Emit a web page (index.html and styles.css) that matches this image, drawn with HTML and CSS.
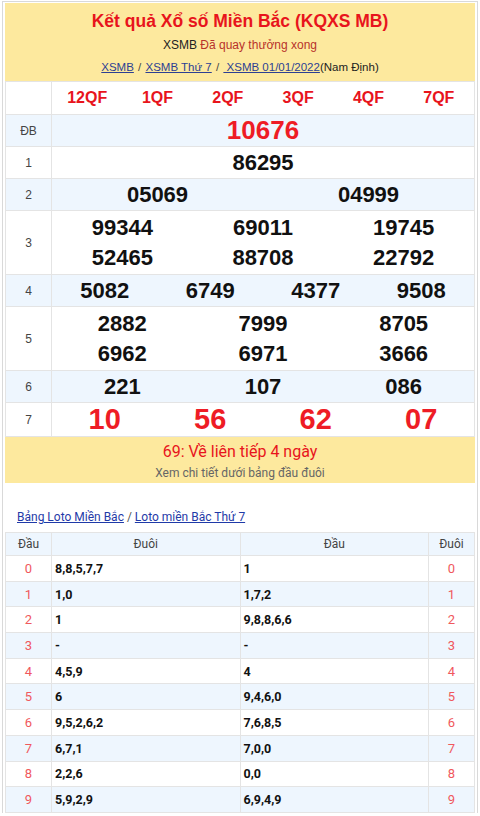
FILE: index.html
```html
<!DOCTYPE html>
<html lang="vi">
<head>
<meta charset="utf-8">
<title>KQXS MB</title>
<link rel="stylesheet" href="styles.css">
</head>
<body>
<div class="page">
  <div class="head">
    <h1 class="title">Kết quả Xổ số Miền Bắc (KQXS MB)</h1>
    <div class="sub"><span class="sub-k">XSMB</span> <span class="sub-v">Đã quay thưởng xong</span></div>
    <div class="crumbs"><a href="#">XSMB</a> <span class="sep">/</span> <a href="#">XSMB Thứ 7</a> <span class="sep">/</span> <a href="#">&nbsp;XSMB 01/01/2022</a>(Nam Định)</div>
  </div>
  <table class="kq">
    <tbody>
      <tr class="qf"><td class="lab"></td><td><div class="nums"><span>12QF</span><span>1QF</span><span>2QF</span><span>3QF</span><span>4QF</span><span>7QF</span></div></td></tr>
      <tr class="alt r1"><td class="lab">ĐB</td><td><div class="nums db"><span>10676</span></div></td></tr>
      <tr class="r1"><td class="lab">1</td><td><div class="nums"><span>86295</span></div></td></tr>
      <tr class="alt r1"><td class="lab">2</td><td><div class="nums"><span>05069</span><span>04999</span></div></td></tr>
      <tr class="r2"><td class="lab">3</td><td><div class="nums g3"><span>99344</span><span>69011</span><span>19745</span><span>52465</span><span>88708</span><span>22792</span></div></td></tr>
      <tr class="alt r1"><td class="lab">4</td><td><div class="nums"><span>5082</span><span>6749</span><span>4377</span><span>9508</span></div></td></tr>
      <tr class="r2"><td class="lab">5</td><td><div class="nums g3"><span>2882</span><span>7999</span><span>8705</span><span>6962</span><span>6971</span><span>3666</span></div></td></tr>
      <tr class="alt r1"><td class="lab">6</td><td><div class="nums"><span>221</span><span>107</span><span>086</span></div></td></tr>
      <tr class="r1 last"><td class="lab">7</td><td><div class="nums g7"><span>10</span><span>56</span><span>62</span><span>07</span></div></td></tr>
    </tbody>
  </table>
  <div class="banner">
    <div class="b-main">69: Về liên tiếp 4 ngày</div>
    <div class="b-sub">Xem chi tiết dưới bảng đầu đuôi</div>
  </div>
  <div class="loto-links"><a href="#">Bảng Loto Miền Bắc</a> / <a href="#">Loto miền Bắc Thứ 7</a></div>
  <table class="loto">
    <colgroup><col class="c-n"><col class="c-v"><col class="c-v"><col class="c-n"></colgroup>
    <thead>
      <tr><th>Đầu</th><th>Đuôi</th><th>Đầu</th><th>Đuôi</th></tr>
    </thead>
    <tbody>
      <tr><td class="n">0</td><td class="v">8,8,5,7,7</td><td class="v">1</td><td class="n">0</td></tr>
      <tr class="alt"><td class="n">1</td><td class="v">1,0</td><td class="v">1,7,2</td><td class="n">1</td></tr>
      <tr><td class="n">2</td><td class="v">1</td><td class="v">9,8,8,6,6</td><td class="n">2</td></tr>
      <tr class="alt"><td class="n">3</td><td class="v">-</td><td class="v">-</td><td class="n">3</td></tr>
      <tr><td class="n">4</td><td class="v">4,5,9</td><td class="v">4</td><td class="n">4</td></tr>
      <tr class="alt"><td class="n">5</td><td class="v">6</td><td class="v">9,4,6,0</td><td class="n">5</td></tr>
      <tr><td class="n">6</td><td class="v">9,5,2,6,2</td><td class="v">7,6,8,5</td><td class="n">6</td></tr>
      <tr class="alt"><td class="n">7</td><td class="v">6,7,1</td><td class="v">7,0,0</td><td class="n">7</td></tr>
      <tr><td class="n">8</td><td class="v">2,2,6</td><td class="v">0,0</td><td class="n">8</td></tr>
      <tr class="alt"><td class="n">9</td><td class="v">5,9,2,9</td><td class="v">6,9,4,9</td><td class="n">9</td></tr>
    </tbody>
  </table>
</div>
</body>
</html>
```

FILE: styles.css
```css
html, body {
  margin: 0;
  padding: 0;
  background: #fff;
}
body {
  font-family: "Liberation Sans", Arial, sans-serif;
  color: #222;
}
.page {
  margin: 1px 2px 0;
  border: 1px solid #d9d9d9;
  border-bottom: none;
  padding: 1px 2px 0;
  min-height: 810px;
}
.head {
  background: #fde99e;
  text-align: center;
  padding: 6px 0 4px;
  height: 68px;
}
.title {
  margin: 0;
  font-size: 17.5px;
  line-height: 24px;
  color: #e8141c;
  font-weight: bold;
}
.sub {
  font-size: 12px;
  line-height: 16px;
  margin-top: 4px;
}
.sub-k { color: #222; }
.sub-v { color: #b8322a; }
.crumbs {
  font-size: 11.5px;
  line-height: 16px;
  margin-top: 6px;
  color: #222;
}
.crumbs a {
  color: #2d3f93;
  text-decoration: underline;
}
.crumbs .sep {
  margin: 0 1px;
  color: #444;
}
.kq {
  width: 100%;
  border-collapse: collapse;
  table-layout: fixed;
}
.kq td {
  border: 1px solid #e4e4e4;
  padding: 0;
}
.kq td.lab {
  width: 45px;
  text-align: center;
  font-size: 12px;
  color: #444;
}
.kq tr.alt td {
  background: #eef6fe;
}
.kq tr.qf td { height: 32px; }
.kq tr.r1 td { height: 31px; }
.kq tr.r2 td { height: 63px; }
.kq tr.last td { height: 32px; }
.nums {
  display: flex;
  flex-wrap: wrap;
  font-weight: bold;
  font-size: 22px;
  color: #111;
}
.nums span {
  flex: 1 1 0;
  text-align: center;
}
.g3 span {
  flex: 0 0 33.333%;
  line-height: 30px;
}
.qf .nums {
  color: #e8141c;
  font-size: 16px;
}
.db {
  color: #ee1c25;
  font-size: 26px;
}
.g7 {
  color: #ee1c25;
  font-size: 29px;
}
.banner {
  background: #fde99e;
  text-align: center;
  padding: 5px 0 3px;
  font-family: Roboto, "Liberation Sans", sans-serif;
  height: 38px;
}
.b-main {
  color: #e8141c;
  font-size: 16px;
  line-height: 20px;
}
.b-sub {
  color: #666;
  font-size: 12px;
  line-height: 16px;
  margin-top: 3px;
}
.loto-links {
  font-family: Roboto, "Liberation Sans", sans-serif;
  font-size: 12px;
  line-height: 18px;
  padding: 25px 12px 6px;
  color: #555;
}
.loto-links a {
  color: #1f3aa8;
  text-decoration: underline;
}
.loto {
  width: 100%;
  border-collapse: collapse;
  table-layout: fixed;
  font-family: Roboto, "Liberation Sans", sans-serif;
}
.loto col.c-n { width: 46px; }
.loto th, .loto td {
  border: 1px solid #e4e4e4;
  padding: 0;
}
.loto th {
  background: #eef6fe;
  font-weight: normal;
  font-size: 12px;
  color: #444;
  height: 22px;
}
.loto td {
  height: 24.7px;
}
.loto tr.alt td {
  background: #eef6fe;
}
.loto td.n {
  text-align: center;
  color: #f0585d;
  font-size: 13px;
}
.loto td.v {
  text-align: left;
  padding-left: 3px;
  font-weight: bold;
  font-size: 12.5px;
  color: #111;
}
```
